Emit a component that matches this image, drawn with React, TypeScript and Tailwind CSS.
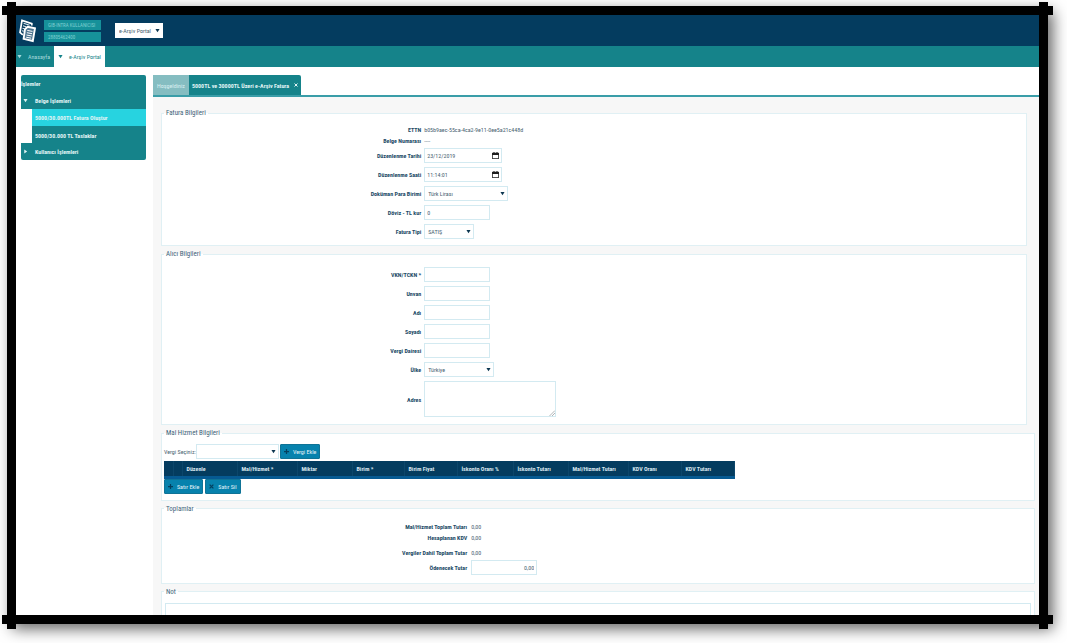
import type { ReactNode } from "react";

const control =
  "h-[15px] border border-[#d3eaf1] bg-white px-[2px] text-[#48616f] outline-none";

function Triangle({ dir = "down", className = "" }: { dir?: "down" | "right"; className?: string }) {
  return (
    <svg viewBox="0 0 6 6" className={`size-[5px] shrink-0 ${className}`} fill="currentColor" aria-hidden="true">
      <path d={dir === "down" ? "M0.5 1.2h5L3 5z" : "M1.5 0.5v5L5 3z"} />
    </svg>
  );
}

function Select({ id, label, options, width, className = "" }: { id: string; label?: string; options: string[]; width: string; className?: string }) {
  return (
    <span className={`relative flex items-center ${width}`}>
      <select id={id} aria-label={label} className={`${control} w-full appearance-none pl-[3px] ${className}`}>
        {options.map((o) => (
          <option key={o}>{o}</option>
        ))}
      </select>
      <Triangle className="pointer-events-none absolute right-[3px] text-[#0c3650]" />
    </span>
  );
}

function CalendarIcon() {
  return (
    <svg viewBox="0 0 14 14" className="size-[7px]" aria-hidden="true">
      <path fill="#1c1c1c" fillRule="evenodd" d="M3 0h2v1.5h4V0h2v1.5h2c.6 0 1 .4 1 1V13c0 .6-.4 1-1 1H1c-.6 0-1-.4-1-1V2.500c0-.6.400-1 1-1h2zM1.500 6v6.500h11V6z" />
    </svg>
  );
}

function PickerInput({ id, value }: { id: string; value: string }) {
  return (
    <span className="relative flex w-[78px] items-center">
      <input id={id} defaultValue={value} className={`${control} w-full`} />
      <button type="button" aria-label="Takvim" className="absolute right-[3px]">
        <CalendarIcon />
      </button>
    </span>
  );
}

function Row({ id, label, children }: { id?: string; label: string; children: ReactNode }) {
  return (
    <div className="flex items-center gap-[3px]">
      <label htmlFor={id} className="w-[30%] shrink-0 text-right font-bold text-[#1c4a66]">
        {label}
      </label>
      {children}
    </div>
  );
}

function TotalRow({ id, label, children }: { id?: string; label: string; children: ReactNode }) {
  return (
    <div className="flex items-center gap-[4px]">
      <label htmlFor={id} className="w-[35%] shrink-0 text-right font-bold text-[#1c4a66]">
        {label}
      </label>
      {children}
    </div>
  );
}

function Section({ title, className = "", children }: { title: string; className?: string; children: ReactNode }) {
  return (
    <fieldset className={`min-w-0 border border-[#e0f0f4] bg-white ${className}`}>
      <legend className="ml-[2px] px-[2px] text-[7px] leading-[12px] text-[#41647a]">{title}</legend>
      {children}
    </fieldset>
  );
}

function ActionButton({ icon, children }: { icon: "plus" | "times"; children: ReactNode }) {
  return (
    <button type="button" className="flex h-[15px] items-center gap-[4px] rounded-[1px] border border-[#0f7396] bg-[#0782ad] px-[3px] text-[#e4f4fa]">
      <svg viewBox="0 0 8 8" className="size-[5px]" stroke="#04405f" strokeWidth="2" aria-hidden="true">
        <path d={icon === "plus" ? "M4 0v8M0 4h8" : "M1 1l6 6M7 1L1 7"} />
      </svg>
      {children}
    </button>
  );
}

function Logo() {
  return (
    <svg viewBox="0 0 17 24" className="h-[24px] w-[17px]" fill="none" aria-hidden="true">
      <path d="M12.800 6.500V4.600L3 1.400L1 13.500L3.800 15.800" stroke="#fff" strokeWidth="1.700" />
      <path d="M4.600 4.300l6 2M4 6.700l3 1M3.500 9.200l2 .6M3 11.700l1.800.5" stroke="#dfe9ef" strokeWidth="1.100" />
      <path d="M8.500 7.800L16 9.200L13.800 22L4.600 19.800L6 10.200z" fill="#4d7590" stroke="#fff" strokeWidth="1.900" />
      <path d="M8.300 11.400l5.200 1M7.900 13.700l5.200 1M7.500 16l5.200 1M7.200 18.200l5 1" stroke="#fff" strokeWidth="1" />
    </svg>
  );
}

const columns = [
  { title: "", width: "w-[9px]" },
  { title: "", width: "w-[9px]" },
  { title: "Düzenle", width: "w-[55px]" },
  { title: "Mal/Hizmet *", width: "w-[60px]" },
  { title: "Miktar", width: "w-[55px]" },
  { title: "Birim *", width: "w-[52px]" },
  { title: "Birim Fiyat", width: "w-[53px]" },
  { title: "İskonto Oranı %", width: "w-[56px]" },
  { title: "İskonto Tutarı", width: "w-[55px]" },
  { title: "Mal/Hizmet Tutarı", width: "w-[60px]" },
  { title: "KDV Oranı", width: "w-[53px]" },
  { title: "KDV Tutarı", width: "w-[53px]" },
];

const buyerFields = [
  { id: "vkn", label: "VKN/TCKN *" },
  { id: "unvan", label: "Unvan" },
  { id: "adi", label: "Adı" },
  { id: "soyadi", label: "Soyadı" },
  { id: "vergi-dairesi", label: "Vergi Dairesi" },
];

function Header() {
  return (
    <header>
      <div className="flex h-[31px] items-center bg-[#043c5f] pl-[3px]">
        <Logo />
        <div className="ml-[8px] flex w-[57px] flex-col gap-[2px] text-[5px] text-[#7fd0d2]">
          <span className="h-[10px] whitespace-nowrap bg-[#16919a] px-[4px] leading-[10px]">GIB-INTRA KULLANICISI</span>
          <span className="h-[10px] bg-[#16919a] px-[4px] leading-[10px]">28805462400</span>
        </div>
        <div className="ml-[14px]">
          <Select id="portal" label="Portal" options={["e-Arşiv Portal"]} width="w-[48px]" className="border-white" />
        </div>
      </div>
      <nav className="flex h-[21px] bg-[#15838a]">
        <a href="#anasayfa" className="flex w-[38px] items-center gap-[6px] pl-[1px] text-[#a5dadc]">
          <Triangle />
          Anasayfa
        </a>
        <a href="#portal" className="flex w-[51px] items-center gap-[6px] bg-white pl-[4px] text-[#15838a]">
          <Triangle />
          e-Arşiv Portal
        </a>
      </nav>
    </header>
  );
}

function Sidebar() {
  return (
    <aside className="ml-[5px] w-[125px] shrink-0 self-start overflow-hidden rounded-[2px] bg-[#15838a] font-bold text-[#e0f4f5]">
      <h2 className="h-[17px] leading-[18px]">İşlemler</h2>
      <a href="#belge" className="flex h-[17px] items-center gap-[7px] pl-[2px]">
        <Triangle />
        Belge İşlemleri
      </a>
      <div className="border-l-[11px] border-white">
        <a href="#olustur" className="block h-[17px] bg-[#27d3e0] pl-[3px] leading-[17px]">
          5000/30.000TL Fatura Oluştur
        </a>
        <a href="#taslaklar" className="block h-[17px] pl-[3px] leading-[19px]">
          5000/30.000 TL Taslaklar
        </a>
      </div>
      <a href="#kullanici" className="flex h-[17px] items-center gap-[7px] pl-[2px]">
        <Triangle dir="right" />
        Kullanıcı İşlemleri
      </a>
    </aside>
  );
}

export default function App() {
  return (
    <div className="h-screen bg-white pt-[6px] pr-[19px] pb-[19px] pl-[7px] font-['Roboto_Condensed','Liberation_Sans_Narrow','Roboto',sans-serif] text-[6px] leading-[9px]">
      <div className="relative h-full border-9 border-black shadow-[5px_5px_14px_rgba(0,0,0,0.6)]">
        <i className="absolute -top-[9px] -left-[14px] h-[9px] w-[5px] bg-black" />
        <i className="absolute -bottom-[9px] -left-[14px] h-[9px] w-[5px] bg-black" />
        <i className="absolute -top-[9px] -right-[14px] h-[9px] w-[5px] bg-black" />
        <i className="absolute -right-[14px] -bottom-[9px] h-[9px] w-[5px] bg-black" />
        <i className="absolute -top-[13px] -left-[9px] h-[4px] w-[9px] bg-black" />
        <i className="absolute -top-[13px] -right-[9px] h-[4px] w-[9px] bg-black" />
        <i className="absolute -bottom-[14px] -left-[9px] h-[5px] w-[9px] bg-black" />
        <i className="absolute -right-[9px] -bottom-[14px] h-[5px] w-[9px] bg-black" />

        <div className="flex h-full flex-col overflow-hidden bg-white">
          <Header />
          <div className="flex min-h-0 grow gap-[7px] pt-[8px]">
            <Sidebar />
            <main className="flex min-w-0 grow flex-col">
              <div className="flex h-[22px] shrink-0 items-stretch border-b-2 border-[#3a9da8]">
                <button type="button" className="w-[36px] bg-[#85bdc1] text-center text-[#d9f0f1]">
                  Hoşgeldiniz
                </button>
                <button type="button" className="flex w-[112px] items-center justify-between rounded-tr-[2px] bg-[#15838a] px-[3px] font-bold text-[#e0f4f5]">
                  5000TL ve 30000TL Üzeri e-Arşiv Fatura
                  <svg viewBox="0 0 8 8" className="size-[4px]" stroke="currentColor" strokeWidth="2" aria-hidden="true">
                    <path d="M1 1l6 6M7 1L1 7" />
                  </svg>
                </button>
              </div>

              <div className="flex grow flex-col gap-[2px] bg-[#f7f7f7] pt-[10px] pr-[4px] pl-[8px]">
                <Section title="Fatura Bilgileri" className="mr-[8px] pb-[6px]">
                  <div className="flex flex-col gap-[2px] pt-[6px] text-[#48616f]">
                    <Row label="ETTN">b05b9aec-55ca-4ca2-9e11-0ee5a21c448d</Row>
                    <Row label="Belge Numarası">----</Row>
                  </div>
                  <div className="flex flex-col gap-[4px] pt-[3px]">
                    <Row id="tarih" label="Düzenlenme Tarihi">
                      <PickerInput id="tarih" value="23/12/2019" />
                    </Row>
                    <Row id="saat" label="Düzenlenme Saati">
                      <PickerInput id="saat" value="11:14:01" />
                    </Row>
                    <Row id="para" label="Doküman Para Birimi">
                      <Select id="para" options={["Türk Lirası"]} width="w-[84px]" />
                    </Row>
                    <Row id="kur" label="Döviz - TL kur">
                      <input id="kur" defaultValue="0" className={`${control} w-[66px]`} />
                    </Row>
                    <Row id="tip" label="Fatura Tipi">
                      <Select id="tip" options={["SATIŞ"]} width="w-[50px]" />
                    </Row>
                  </div>
                </Section>

                <Section title="Alıcı Bilgileri" className="mr-[8px] pb-[7px]">
                  <div className="flex flex-col gap-[4px] pt-[7px]">
                    {buyerFields.map((f) => (
                      <Row key={f.id} id={f.id} label={f.label}>
                        <input id={f.id} className={`${control} w-[66px]`} />
                      </Row>
                    ))}
                    <Row id="ulke" label="Ülke">
                      <Select id="ulke" options={["Türkiye"]} width="w-[70px]" />
                    </Row>
                    <Row id="adres" label="Adres">
                      <span className="relative flex">
                        <textarea id="adres" className="h-[36px] w-[132px] resize-none border border-[#d3eaf1] bg-white p-[2px] outline-none" />
                        <svg viewBox="0 0 6 6" className="pointer-events-none absolute right-[1px] bottom-[1px] size-[6px]" stroke="#8f9599" strokeWidth="0.700" aria-hidden="true">
                          <path d="M0.500 6L6 0.500M3 6L6 3" />
                        </svg>
                      </span>
                    </Row>
                  </div>
                </Section>

                <Section title="Mal Hizmet Bilgileri" className="pb-[6px]">
                  <div className="px-[2px]">
                    <div className="flex items-center gap-[1px] pt-[5px] pb-[2px] text-[#48616f]">
                      <label htmlFor="vergi" className="w-[31px] whitespace-nowrap">
                        Vergi Seçiniz:
                      </label>
                      <Select id="vergi" options={[""]} width="w-[83px]" />
                      <ActionButton icon="plus">Vergi Ekle</ActionButton>
                    </div>
                    <table className="table-fixed border-collapse">
                      <thead>
                        <tr className="h-[16px] border-b-[3px] border-[#065a92] bg-[#043c5f] text-left text-[#d7e5ee]">
                          {columns.map((c, i) => (
                            <th key={i} scope="col" className={`${c.width} border-r border-r-[#0c466a] p-0 pl-[4px] whitespace-nowrap`}>
                              {c.title}
                            </th>
                          ))}
                        </tr>
                      </thead>
                    </table>
                    <div className="flex gap-[2px]">
                      <ActionButton icon="plus">Satır Ekle</ActionButton>
                      <ActionButton icon="times">Satır Sil</ActionButton>
                    </div>
                  </div>
                </Section>

                <Section title="Toplamlar" className="pb-[8px]">
                  <div className="flex flex-col gap-[2px] pt-[7px] text-[#48616f]">
                    <TotalRow label="Mal/Hizmet Toplam Tutarı">0,00</TotalRow>
                    <TotalRow label="Hesaplanan KDV">0,00</TotalRow>
                  </div>
                  <div className="flex flex-col gap-[3px] pt-[6px] text-[#48616f]">
                    <TotalRow label="Vergiler Dahil Toplam Tutar">0,00</TotalRow>
                    <TotalRow id="odenecek" label="Ödenecek Tutar">
                      <input id="odenecek" defaultValue="0,00" className={`${control} w-[66px] text-right`} />
                    </TotalRow>
                  </div>
                </Section>

                <Section title="Not">
                  <div className="px-[3px] pt-[5px]">
                    <textarea aria-label="Not" className="block h-[40px] w-full resize-none border border-[#d3eaf1] bg-white outline-none" />
                  </div>
                </Section>
              </div>
            </main>
          </div>
        </div>
      </div>
    </div>
  );
}
